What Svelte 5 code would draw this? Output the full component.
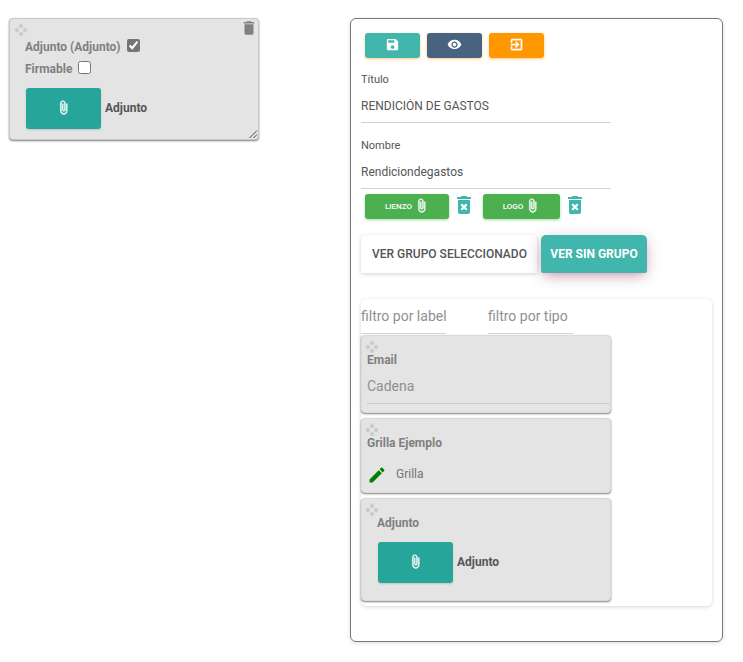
<script lang="ts">
	let attached = $state(true);
	let signable = $state(false);
	let title = $state('RENDICIÓN DE GASTOS');
	let name = $state('Rendiciondegastos');

	const icons = {
		save: 'M17 3H5c-1.11 0-2 .9-2 2v14c0 1.1.89 2 2 2h14c1.1 0 2-.9 2-2V7l-4-4zm-5 16c-1.66 0-3-1.34-3-3s1.34-3 3-3 3 1.34 3 3-1.34 3-3 3zm3-10H5V5h10v4z',
		view: 'M12 4.5C7 4.5 2.73 7.61 1 12c1.73 4.39 6 7.5 11 7.5s9.27-3.11 11-7.5c-1.73-4.39-6-7.5-11-7.5zM12 17c-2.76 0-5-2.24-5-5s2.24-5 5-5 5 2.24 5 5-2.24 5-5 5zm0-8c-1.66 0-3 1.34-3 3s1.34 3 3 3 3-1.34 3-3-1.34-3-3-3z',
		exit: 'M10.09 15.59L11.5 17l5-5-5-5-1.41 1.41L12.67 11H3v2h9.67l-2.58 2.59zM19 3H5c-1.11 0-2 .9-2 2v4h2V5h14v14H5v-4H3v4c0 1.1.89 2 2 2h14c1.1 0 2-.9 2-2V5c0-1.1-.9-2-2-2z',
		trash: 'M6 19c0 1.1.9 2 2 2h8c1.1 0 2-.9 2-2V7H6v12zM19 4h-3.5l-1-1h-5l-1 1H5v2h14V4z',
		clip: 'M16.5 6v11.5c0 2.21-1.79 4-4 4s-4-1.79-4-4V5c0-1.38 1.12-2.5 2.5-2.5s2.5 1.12 2.5 2.5v10.5c0 .55-.45 1-1 1s-1-.45-1-1V6H10v9.5c0 1.38 1.12 2.5 2.5 2.5s2.5-1.12 2.5-2.5V5c0-2.21-1.79-4-4-4S7 2.79 7 5v12.5c0 3.04 2.46 5.5 5.5 5.5s5.5-2.46 5.5-5.5V6h-1.5z',
		edit: 'M3 17.25V21h3.75L17.81 9.94l-3.75-3.75L3 17.25zM20.71 7.04c.39-.39.39-1.02 0-1.41l-2.34-2.34c-.39-.39-1.02-.39-1.41 0l-1.83 1.83 3.75 3.75 1.83-1.83z',
		move: 'M12 .5l4.5 4.5-3 3.5h-3L7.5 5zM12 23.5l4.5-4.5-3-3.5h-3L7.5 19zM.5 12L5 7.5l3.5 3v3L5 16.5zM23.5 12L19 7.5l-3.5 3v3l3.5 3z'
	};
</script>

{#snippet icon(path: string, size: number, cls = '')}
	<svg class="icon {cls}" width={size} height={size} viewBox="0 0 24 24" aria-hidden="true">
		<path d={path} />
	</svg>
{/snippet}

{#snippet clearIcon()}
	<svg class="icon clear" width="14" height="18" viewBox="0 0 14 18" aria-hidden="true">
		<path d="M0 1h3.5l1-1h5l1 1H14v2H0zM1 4h12v12a2 2 0 0 1-2 2H3a2 2 0 0 1-2-2z" />
		<path class="cross" d="M4.3 8.3l5.4 5.4M9.7 8.3l-5.4 5.4" />
	</svg>
{/snippet}

{#snippet attachment()}
	<div class="attachment">
		<button class="btn btn--attach" aria-label="Adjunto">{@render icon(icons.clip, 15, 'clip')}</button>
		<b>Adjunto</b>
	</div>
{/snippet}

<main class="page">
	<section class="card card--canvas">
		{@render icon(icons.move, 14, 'move')}
		{@render icon(icons.trash, 18, 'remove')}
		<label class="check">Adjunto (Adjunto) <input type="checkbox" bind:checked={attached} /></label>
		<label class="check">Firmable <input type="checkbox" bind:checked={signable} /></label>
		{@render attachment()}
		<svg class="grip" width="9" height="9" viewBox="0 0 9 9" aria-hidden="true">
			<path d="M0.5 8L8 0.5M4.5 8L8 4.5" />
		</svg>
	</section>

	<aside class="panel">
		<div class="toolbar">
			<button class="btn btn--save" aria-label="Guardar">{@render icon(icons.save, 15)}</button>
			<button class="btn btn--view" aria-label="Ver">{@render icon(icons.view, 15)}</button>
			<button class="btn btn--exit" aria-label="Salir">{@render icon(icons.exit, 15, 'exit')}</button>
		</div>

		<label class="field">Título<input type="text" bind:value={title} /></label>
		<label class="field">Nombre<input type="text" bind:value={name} /></label>

		<div class="files">
			<button class="btn btn--file">LIENZO {@render icon(icons.clip, 15, 'clip')}</button>
			{@render clearIcon()}
			<button class="btn btn--file btn--logo">LOGO {@render icon(icons.clip, 15, 'clip')}</button>
			{@render clearIcon()}
		</div>

		<div class="tabs">
			<button class="tab">VER GRUPO SELECCIONADO</button>
			<button class="tab tab--active">VER SIN GRUPO</button>
		</div>

		<div class="group">
			<div class="filters">
				<input type="text" placeholder="filtro por label" />
				<input type="text" placeholder="filtro por tipo" />
			</div>

			<div class="card card--email">
				{@render icon(icons.move, 14, 'move')}
				<h4>Email</h4>
				<input type="text" placeholder="Cadena" />
			</div>

			<div class="card card--grid">
				{@render icon(icons.move, 14, 'move')}
				<h4>Grilla Ejemplo</h4>
				<div class="grid-row">
					{@render icon(icons.edit, 20, 'edit')}
					<span>Grilla</span>
				</div>
			</div>

			<div class="card card--file">
				{@render icon(icons.move, 14, 'move')}
				<h4>Adjunto</h4>
				{@render attachment()}
			</div>
		</div>
	</aside>
</main>

<style>
	:global(body) {
		background: #fff;
	}

	.page,
	.page * {
		box-sizing: border-box;
	}

	.page {
		display: flex;
		align-items: flex-start;
		justify-content: space-between;
		height: 662px;
		padding: 18px 20px 0 9px;
		font: 12px Roboto, sans-serif;
		color: #555;
	}

	button,
	input {
		font-family: inherit;
	}

	button {
		padding: 0;
		border: 0;
	}

	.icon {
		display: block;
		flex-shrink: 0;
		fill: currentColor;
	}

	.clip,
	.exit {
		stroke: currentColor;
		stroke-width: 0.7;
	}

	/* cards */
	.card {
		position: relative;
		width: 250px;
		border: 1px solid #dadada;
		border-radius: 4px;
		background: #e4e4e4;
		box-shadow: 0 1px 2px rgba(0, 0, 0, 0.5);
	}

	.card--canvas {
		height: 122px;
		padding: 17px 16px 0;
		border-color: #c8c8c8;
	}

	.move {
		position: absolute;
		top: 4px;
		left: 4px;
		color: #cbcbcb;
	}

	.group .move {
		left: 3px;
	}

	.remove {
		position: absolute;
		top: 0;
		right: 0;
		color: #808080;
	}

	.grip {
		position: absolute;
		right: 0;
		bottom: 0;
		fill: none;
		stroke: #444;
	}

	.check {
		display: flex;
		align-items: center;
		gap: 6px;
		height: 22px;
		margin-left: -1px;
		font-weight: bold;
		color: #808080;
	}

	.check input {
		width: 13px;
		height: 13px;
		margin: 0 0 4px;
		accent-color: #757575;
	}

	.attachment {
		display: flex;
		align-items: center;
		gap: 4px;
		margin-top: 8px;
	}

	.attachment b {
		padding-bottom: 2px;
	}

	h4 {
		margin: 0;
		font-size: 12px;
		line-height: 14px;
		color: #808080;
	}

	/* buttons */
	.btn {
		display: flex;
		align-items: center;
		justify-content: center;
		width: 55px;
		height: 25px;
		border-radius: 3px;
		color: #fff;
	}

	.btn--attach {
		width: 75px;
		height: 41px;
		background: #26a69a;
		box-shadow: 0 1px 2px rgba(0, 0, 0, 0.15);
	}

	.btn--attach .clip {
		margin-bottom: 2px;
	}

	.btn--save,
	.btn--view,
	.btn--exit {
		box-shadow: 0 1px 3px rgba(255, 152, 0, 0.5);
	}

	.toolbar .icon {
		margin-bottom: 2px;
	}

	.btn--save {
		background: #41b6ac;
	}

	.btn--view {
		background: #47637f;
	}

	.btn--exit {
		background: #ff9800;
	}

	.btn--file {
		gap: 2px;
		width: 84px;
		font-size: 8px;
		font-weight: 500;
		background: #4caf50;
		box-shadow: 0 1px 3px rgba(76, 175, 80, 0.5);
	}

	.btn--file .clip {
		margin-bottom: 2px;
	}

	.btn--logo {
		width: 77px;
		margin-left: 4px;
	}

	/* form panel */
	.panel {
		width: 373px;
		height: 624px;
		padding: 14px 10px 0;
		border: 1px solid #777;
		border-radius: 6px;
		box-shadow: 0 1px 4px rgba(0, 0, 0, 0.14);
	}

	.toolbar {
		display: flex;
		gap: 7px;
		padding-left: 4px;
	}

	.field {
		display: block;
		width: 250px;
		margin-top: 15px;
		font-size: 11px;
		line-height: 14px;
		color: #555;
	}

	.field + .field {
		margin-top: 16px;
	}

	input[type='text'] {
		display: block;
		padding: 0;
		border: 0;
		border-bottom: 1px solid #d2d2d2;
		outline: 0;
		background: transparent;
	}

	.field input[type='text'] {
		width: 100%;
		height: 36px;
		padding-top: 2px;
		font-size: 12px;
		color: #555;
	}

	.files {
		display: flex;
		align-items: center;
		gap: 8px;
		margin-top: 5px;
		padding-left: 4px;
	}

	.clear {
		margin-bottom: 4px;
		color: #41b6ac;
	}

	.cross {
		stroke: #fff;
		stroke-width: 2.2;
	}

	.tabs {
		display: flex;
		gap: 4px;
		margin-top: 16px;
	}

	.tab {
		width: 176px;
		height: 38px;
		padding-left: 1px;
		border-radius: 5px 5px 0 0;
		font-size: 12px;
		font-weight: 500;
		color: #555;
		background: #fff;
		box-shadow: 0 1px 4px rgba(0, 0, 0, 0.18);
	}

	.tab--active {
		width: 106px;
		padding-left: 0;
		border-radius: 5px 5px 2px 2px;
		font-weight: bold;
		color: #fff;
		background: #41b6ac;
		box-shadow: 0 4px 12px -3px rgba(190, 40, 90, 0.5), 0 3px 20px rgba(0, 0, 0, 0.1);
	}

	.group {
		height: 307px;
		margin-top: 26px;
		border-radius: 6px;
		background: #fff;
		box-shadow: 0 1px 4px rgba(0, 0, 0, 0.16);
	}

	.filters {
		display: flex;
		gap: 42px;
		margin-bottom: 1px;
	}

	.filters input {
		width: 85px;
		height: 35px;
		font-size: 14px;
	}

	input::placeholder {
		color: #909090;
		opacity: 1;
	}

	.group .card + .card {
		margin-top: 5px;
	}

	.card--email {
		height: 78px;
		padding: 17px 0 0 5px;
	}

	.card--email input[type='text'] {
		width: 100%;
		height: 37px;
		padding-top: 2px;
		font-size: 14px;
		border-color: #ccc;
	}

	.card--grid {
		height: 75px;
		padding: 17px 5px 0;
	}

	.grid-row {
		display: flex;
		align-items: center;
		gap: 9px;
		margin-top: 14px;
		color: #757575;
	}

	.grid-row span {
		padding-bottom: 2px;
	}

	.edit {
		margin-top: 1px;
		color: #008000;
	}

	.card--file {
		height: 103px;
		padding: 17px 16px 0;
	}

	.card--file h4 {
		margin: 0 0 12px -1px;
	}
</style>
